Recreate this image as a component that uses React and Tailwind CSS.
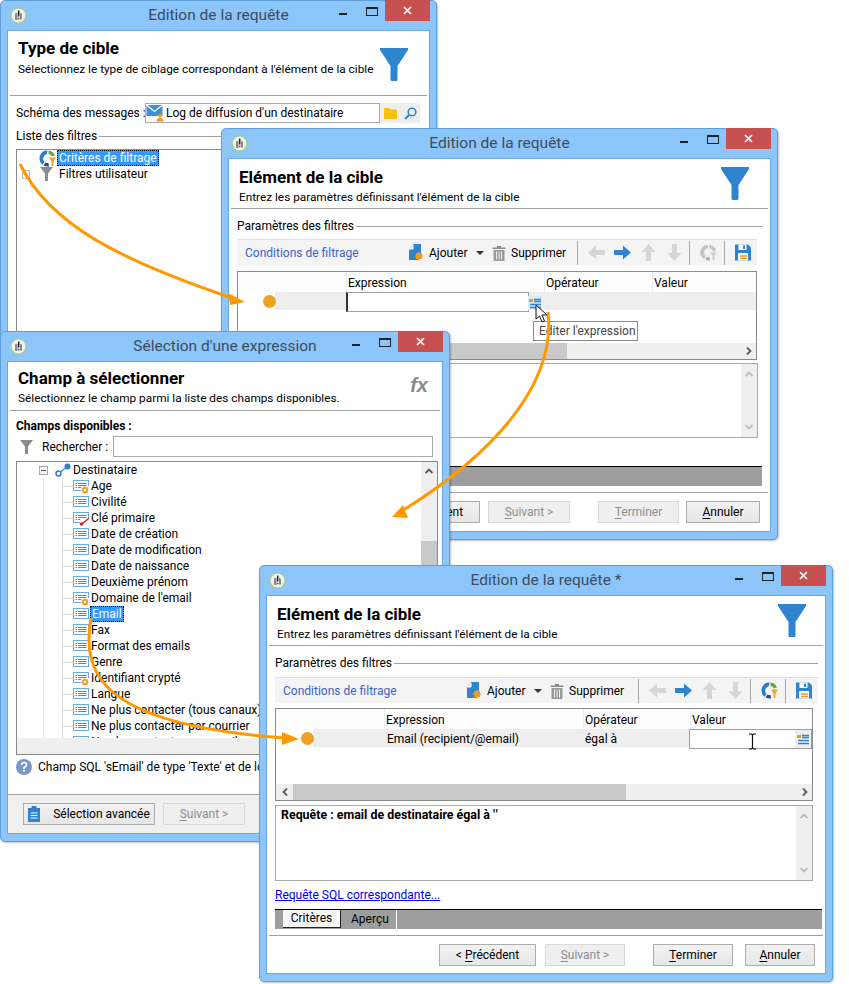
import React from "react";

// --- small drawings ---
function AppIcon() {
  return (
    <svg width="17" height="17" viewBox="0 0 17 17" className="shrink-0">
      <circle cx="8.5" cy="8.5" r="7.5" fill="#f2f2ee" stroke="#a6cf7a" strokeWidth="1.2" />
      <path d="M5 6.500L7.500 5.500V13H5zM10 5.500L12 7V12.500H10z" fill="#8a8a8a" />
      <path d="M8.700 3.500V9.500" stroke="#222" strokeWidth="1.400" />
      <path d="M8 11.500h1.500" stroke="#555" strokeWidth="1.400" />
    </svg>
  );
}

function BigFunnel() {
  return (
    <svg width="28" height="33" viewBox="0 0 28 33">
      <path d="M0 0H28V2L17.500 18V31.500Q17.500 33 16 33H12Q10.500 33 10.500 31.500V18L0 2Z" fill="#2f84d0" />
    </svg>
  );
}

function GrayFunnel({ w = 13, h = 14 }) {
  return (
    <svg width={w} height={h} viewBox="0 0 13 14" className="shrink-0">
      <path d="M0 0H13L8 6.500V14H5V6.500Z" fill="#8c8c8c" />
    </svg>
  );
}

function FieldIcon({ kind }) {
  return (
    <svg width="16" height="16" viewBox="0 0 16 16" className="shrink-0">
      <rect x="0.500" y="2.500" width="15" height="10" fill="#fff" stroke="#6fa8dc" />
      <path d="M2.500 5.500h1.500M5 5.500h8.500M2.500 7.500h1.500M5 7.500h8.500M2.500 9.500h1.500M5 9.500h8.500" stroke="#3f8fd8" />
      {kind === "gear" && (
        <g>
          <rect x="8" y="8" width="8" height="8" fill="#fff" />
          <circle cx="12" cy="12" r="2.200" fill="#fff" stroke="#f09a1c" strokeWidth="1.800" />
          <path d="M12 8.500v1M12 14.500v1M8.500 12h1M14.500 12h1M9.500 9.500l.8.8M14.500 9.500l-.8.8M9.500 14.500l.8-.8M14.500 14.500l-.8-.8" stroke="#f09a1c" strokeWidth="1.200" />
        </g>
      )}
      {kind === "key" && (
        <g>
          <path d="M7 9h9v7H7z" fill="#fff" />
          <path d="M16 8l-7 6" stroke="#d8232a" strokeWidth="1.500" />
          <circle cx="8.500" cy="14" r="1.800" fill="#d8232a" />
        </g>
      )}
    </svg>
  );
}

function Connector() {
  return (
    <svg width="16" height="14" viewBox="0 0 16 14" className="shrink-0">
      <path d="M4 10L12 4" stroke="#3f8fd8" strokeWidth="1.500" />
      <circle cx="3.500" cy="10.500" r="2.500" fill="#fff" stroke="#2f7fcb" strokeWidth="1.500" />
      <circle cx="12.500" cy="3.500" r="3" fill="#2f7fcb" />
    </svg>
  );
}

function RefreshIcon() {
  return (
    <svg width="17" height="17" viewBox="0 0 17 17" className="shrink-0">
      <path d="M8 1A7.500 7.500 0 0 0 4 15L6 12A4.200 4.200 0 0 1 8 4.300Z" fill="#c4c4c4" />
      <path d="M9.500 1A7.500 7.500 0 0 1 16 7L13 7.500A4.200 4.200 0 0 0 9.500 4.300Z" fill="#c4c4c4" />
      <path d="M5 15.500A7.500 7.500 0 0 0 10 16.500L9.500 13A4.200 4.200 0 0 1 7 12.500Z" fill="#b0b0b0" />
      <path d="M10 8.500H17L14.500 12V16H12.500V12Z" fill="#cfcfcf" />
    </svg>
  );
}

function MiniRefresh() {
  return (
    <svg width="17" height="17" viewBox="0 0 17 17" className="shrink-0">
      <path d="M8.500 0.500A8 8 0 0 0 3.500 14.700L5.500 12A4.800 4.800 0 0 1 7.800 4Z" fill="#2f78c4" />
      <path d="M9.500 0.500A8 8 0 0 1 16 5.500L13 6.500A4.800 4.800 0 0 0 9.500 4Z" fill="#6da24c" />
      <path d="M4.500 15.200A8 8 0 0 0 10 16.500L9.500 13A4.800 4.800 0 0 1 6.500 12.500Z" fill="#1f4e86" />
      <path d="M10 7.500H17L14.500 11.500V16H12.500V11.500Z" fill="#f4a12a" />
    </svg>
  );
}

function BlockArrow({ dir, active }) {
  const rot = { right: 0, down: 90, left: 180, up: 270 }[dir];
  return (
    <svg width="17" height="17" viewBox="0 0 17 17" className="shrink-0">
      <path
        d="M0 6H9V1.500L17 8.500L9 15.500V11H0Z"
        fill={active ? "#2f84d0" : "#d6d6d6"}
        transform={`rotate(${rot} 8.500 8.500)`}
      />
    </svg>
  );
}

function SaveIcon() {
  return (
    <svg width="16" height="17" viewBox="0 0 16 17" className="shrink-0">
      <path d="M0 0.500H13L16 3.500V16.500H0Z" fill="#2f84d0" />
      <rect x="3.500" y="0.500" width="8" height="5.500" fill="#fff" />
      <rect x="8" y="1.500" width="2" height="3.500" fill="#2f84d0" />
      <rect x="3" y="9" width="10" height="7.500" fill="#fff" />
      <path d="M5 12h7M5 14.500h7" stroke="#f09a1c" strokeWidth="1.500" />
    </svg>
  );
}

function TrashIcon() {
  return (
    <svg width="14" height="16" viewBox="0 0 14 16" className="shrink-0">
      <path d="M5 1h4v1.500h4.500V4H.500V2.500H5z" fill="#8a8a8a" />
      <path d="M1.500 5h11v11h-11z" fill="#9a9a9a" />
      <path d="M4.500 6.500V14.500M7 6.500V14.500M9.500 6.500V14.500" stroke="#ececec" />
    </svg>
  );
}

function AddIcon() {
  return (
    <svg width="15" height="17" viewBox="0 0 15 17" className="shrink-0">
      <path d="M4.500 0H12V9H9V16H0V5Z" fill="#2f84d0" />
      <path d="M4 1V5H0" fill="#fff" stroke="#fff" />
      <circle cx="10" cy="12" r="3.200" fill="#f09a1c" />
      <path d="M10 7.500v9M5.500 12h9M7 9l6 6M13 9l-6 6" stroke="#f09a1c" />
    </svg>
  );
}

function ExprIcon() {
  return (
    <svg width="12" height="13" viewBox="0 0 12 13" className="shrink-0">
      <rect x="0" y="2" width="4" height="3" fill="#f09a1c" />
      <path d="M5 2.500h7M5 4.500h7M1 7.500h11M1 10.500h11" stroke="#2f84d0" strokeWidth="1.300" />
    </svg>
  );
}

function MailIcon() {
  return (
    <svg width="18" height="18" viewBox="0 0 18 18" className="shrink-0">
      <rect x="0.500" y="1" width="16" height="11" fill="#3f8fd8" />
      <path d="M0.500 1L8.500 7.500L16.500 1" fill="none" stroke="#fff" strokeWidth="1.200" />
      <circle cx="14" cy="11.500" r="2" fill="#f09a1c" />
      <path d="M10.500 17.500Q10.500 14 14 14T17.500 17.500Z" fill="#f09a1c" />
    </svg>
  );
}

function FolderIcon() {
  return (
    <svg width="13" height="11" viewBox="0 0 13 11" className="shrink-0">
      <path d="M0 0H5L6 1.500H13V11H0Z" fill="#f2c20c" />
    </svg>
  );
}

function SearchIcon() {
  return (
    <svg width="13" height="13" viewBox="0 0 13 13" className="shrink-0">
      <circle cx="8" cy="5" r="3.800" fill="none" stroke="#2f84d0" strokeWidth="1.500" />
      <path d="M5 8L1 12" stroke="#2f84d0" strokeWidth="2" />
    </svg>
  );
}

function HelpIcon() {
  return (
    <svg width="16" height="16" viewBox="0 0 16 16" className="shrink-0">
      <circle cx="8" cy="8" r="8" fill="#7b97c9" />
      <path d="M5.500 6Q5.500 3.500 8 3.500T10.500 6Q10.500 7.300 8 8.500V10" fill="none" stroke="#fff" strokeWidth="1.600" />
      <rect x="7.100" y="11" width="1.800" height="1.800" fill="#fff" />
    </svg>
  );
}

function ClipboardIcon() {
  return (
    <svg width="12" height="16" viewBox="0 0 12 16" className="shrink-0">
      <path d="M0 2H3.500V0H8.500V2H12V16H0Z" fill="#2f84d0" />
      <path d="M2.500 7h7M2.500 9.500h7M2.500 12h7" stroke="#fff" />
    </svg>
  );
}

function Chevron({ dir, light }) {
  const rot = { right: 0, down: 90, left: 180, up: 270 }[dir];
  return (
    <svg width="8" height="8" viewBox="0 0 8 8" className="shrink-0">
      <path
        d="M2 0.500L5.500 4L2 7.500"
        fill="none"
        stroke={light ? "#bdbdbd" : "#5a5a5a"}
        strokeWidth="1.800"
        transform={`rotate(${rot} 4 4)`}
      />
    </svg>
  );
}

// --- window parts ---
function Win({ className, title, children }) {
  return (
    <div className={`absolute box-border flex flex-col rounded-[5px] border border-[#5f9fdc] bg-[#8cc5f9] shadow-[1px_1px_2px_rgba(0,0,0,0.25)] ${className}`}>
      <div className="grid h-[29px] shrink-0 grid-cols-[1fr_auto_1fr]">
        <div className="flex items-start pl-[9px] pt-[6px]">
          <AppIcon />
        </div>
        <div className="pt-[2px] text-[15.5px] leading-[24px] text-[#3d4c5c]">{title}</div>
        <div className="flex items-start justify-end pr-[6px]">
          <div className="mr-[19px] mt-[12px] h-[2px] w-[8px] bg-[#222]" />
          <div className="mr-[7px] mt-[6px] box-border h-[9px] w-[12px] border border-t-2 border-[#222]" />
          <div className="flex h-[21px] w-[45px] -mt-px items-center justify-center bg-[#c75050]">
            <svg width="9" height="9" viewBox="0 0 9 9">
              <path d="M1 1L8 8M8 1L1 8" stroke="#fff" strokeWidth="1.700" />
            </svg>
          </div>
        </div>
      </div>
      <div className="mx-[6px] mb-[7px] flex min-h-0 flex-1 flex-col overflow-hidden border border-[#6aa8e2] bg-white">
        {children}
      </div>
    </div>
  );
}

function Head({ title, sub, right, h = "h-[49px]", pt = "pt-[8px]", gap = "mt-[2px]" }) {
  return (
    <>
      <div className={`flex shrink-0 justify-between ${h} ${pt} pl-[10px]`}>
        <div>
          <div className="text-[17px] font-bold leading-[20px] text-black">{title}</div>
          <div className={`text-[11.8px] leading-[16px] text-black ${gap}`}>{sub}</div>
        </div>
        {right}
      </div>
      <div className="mx-[2px] h-px shrink-0 bg-[#a0a0a0]" />
    </>
  );
}

function GroupLabel({ children, className }) {
  return (
    <div className={`flex h-[16px] shrink-0 items-center gap-[2px] text-[12px] ${className}`}>
      <span>{children}</span>
      <div className="h-px flex-1 bg-[#a0a0a0]" />
    </div>
  );
}

function Btn({ children, disabled, className }) {
  return (
    <div
      className={`box-border flex h-[22px] items-center justify-center border text-[12px] ${
        disabled
          ? "border-[#d9d9d9] bg-[#efefef] text-[#8d8d8d]"
          : "border-[#acacac] bg-[linear-gradient(#f2f2f2,#e6e6e6)] text-black"
      } ${className}`}
    >
      <span>{children}</span>
    </div>
  );
}

function Toolbar({ refreshActive, className, supprimerW }) {
  return (
    <div className={`flex h-[26px] shrink-0 items-center border-t border-[#e0e0e0] bg-[#f4f4f4] pl-[8px] pr-[6px] text-[12px] ${className}`}>
      <span className="text-[#3a63c8]">Conditions de filtrage</span>
      <div className="ml-auto flex items-center">
        <AddIcon />
        <span className="ml-[5px] w-[42px]">Ajouter</span>
        <div className="ml-[5px] h-0 w-0 border-x-[4px] border-t-[4px] border-x-transparent border-t-[#333]" />
        <div className="ml-[8px]"><TrashIcon /></div>
        <span className={`ml-[5px] ${supprimerW}`}>Supprimer</span>
        <div className="h-[24px] w-px bg-[#a8a8a8]" />
        <div className="ml-[10px] flex gap-[9px]">
          <BlockArrow dir="left" />
          <BlockArrow dir="right" active />
          <BlockArrow dir="up" />
          <BlockArrow dir="down" />
        </div>
        <div className="ml-[6px] h-[24px] w-px bg-[#a8a8a8]" />
        <div className="ml-[10px] mr-[7px]">{refreshActive ? <MiniRefresh /> : <RefreshIcon />}</div>
        <div className="h-[24px] w-px bg-[#a8a8a8]" />
        <div className="ml-[10px]"><SaveIcon /></div>
      </div>
    </div>
  );
}

function HScroll({ thumb, leftArrow }) {
  return (
    <div className="flex h-[16px] shrink-0 items-center bg-[#efefef]">
      <div className="flex w-[17px] shrink-0 items-center justify-center">
        {leftArrow && <Chevron dir="left" />}
      </div>
      <div className={`h-full bg-[#c9c9c9] ${thumb}`} />
      <div className="flex-1" />
      <div className="flex w-[14px] shrink-0 items-center justify-center">
        <Chevron dir="right" />
      </div>
    </div>
  );
}

function FilterTable({ height, thumb, leftArrow, row, className, c2, c3 }) {
  return (
    <div className={`relative box-border flex shrink-0 flex-col border border-[#8a8a8a] text-[12px] ${height} ${className}`}>
      <div className="flex h-[20px] shrink-0 bg-[#fdfdfd]">
        <div className="w-[108px] shrink-0" />
        <div className={`shrink-0 border-l border-[#e3edf7] pl-px leading-[22px] ${c2}`}>Expression</div>
        <div className={`shrink-0 border-l border-[#e3edf7] pl-px leading-[22px] ${c3}`}>Opérateur</div>
        <div className="flex-1 border-l border-[#e3edf7] pl-px leading-[22px]">Valeur</div>
      </div>
      <div className="flex h-[18px] shrink-0 bg-[#eeeeee]">
        <div className="flex w-[37px] shrink-0 items-center justify-end bg-white">
          <div className="-mr-px h-[13px] w-[13px] rounded-full bg-[#f0a023]" />
        </div>
        <div className="w-[71px] shrink-0" />
        {row}
      </div>
      <div className="flex-1" />
      <HScroll thumb={thumb} leftArrow={leftArrow} />
    </div>
  );
}

function TextArea({ height, children, className }) {
  return (
    <div className={`box-border flex shrink-0 border border-[#a9a9a9] text-[12.4px] font-bold text-black ${height} ${className}`}>
      <div className="flex-1 pl-[5px] pt-px leading-[16px]">{children}</div>
      <div className="flex w-[16px] shrink-0 flex-col items-center justify-between bg-[#efefef] py-[6px]">
        <Chevron dir="up" light />
        <Chevron dir="down" light />
      </div>
    </div>
  );
}

function U({ children }) {
  return <span className="underline underline-offset-2">{children}</span>;
}

const fields = [
  ["Age", "gear"],
  ["Civilité"],
  ["Clé primaire", "key"],
  ["Date de création"],
  ["Date de modification"],
  ["Date de naissance"],
  ["Deuxième prénom"],
  ["Domaine de l'email", "gear"],
  ["Email", null, true],
  ["Fax"],
  ["Format des emails"],
  ["Genre"],
  ["Identifiant crypté", "gear"],
  ["Langue"],
  ["Ne plus contacter (tous canaux)"],
  ["Ne plus contacter par courrier"],
  ["Ne plus contacter par email"],
];

function TreeLines({ children }) {
  return (
    <div className="flex h-[16px] shrink-0 items-center">
      <div className="w-[26px] shrink-0" />
      <div className="h-full w-[19px] shrink-0 border-l border-[#e4e4e4]" />
      <div className="flex h-full w-[11px] shrink-0 items-center border-l border-[#dcdcdc]">
        <div className="h-px w-full bg-[#dcdcdc]" />
      </div>
      {children}
    </div>
  );
}

export default function App() {
  return (
    <div className="relative h-[984px] w-[849px] overflow-hidden bg-white font-['Roboto','Liberation_Sans',sans-serif] text-black">
      {/* back window */}
      <Win className="left-0 top-0 h-[345px] w-[437px]" title="Edition de la requête">
        <Head
          title="Type de cible"
          sub="Sélectionnez le type de ciblage correspondant à l'élément de la cible"
          h="h-[64px]"
          pt="pt-[7px]"
          gap="mt-[3px]"
          right={<div className="pr-[21px] pt-[10px]"><BigFunnel /></div>}
        />
        <div className="ml-[8px] mr-[8px] mt-[7px] flex h-[20px] shrink-0 items-center text-[12px]">
          <span className="w-[129px] shrink-0 whitespace-nowrap">Schéma des messages :</span>
          <div className="box-border flex h-full w-[235px] shrink-0 items-center gap-[2px] border border-[#a9a9a9]">
            <MailIcon />
            <span>Log de diffusion d'un destinataire</span>
          </div>
          <div className="flex h-full w-[40px] shrink-0 items-center justify-center gap-[7px] bg-[#eeeeee]">
            <FolderIcon />
            <SearchIcon />
          </div>
        </div>
        <GroupLabel className="ml-[8px] mr-[8px] mt-[5px]">Liste des filtres</GroupLabel>
        <div className="ml-[8px] mr-[8px] mt-[5px] flex-1 border border-[#8a8a8a] text-[12px]">
          <div className="flex h-[16px] items-center pl-[22px]">
            <MiniRefresh />
            <span className="ml-px border border-dotted border-black bg-[#3399ff] px-px leading-[14px] text-white">Critères de filtrage</span>
          </div>
          <div className="flex h-[16px] items-center pl-[5px]">
            <div className="h-[9px] w-[8px] border border-[#bcbcbc]" />
            <div className="ml-[10px]"><GrayFunnel /></div>
            <span className="ml-[6px]">Filtres utilisateur</span>
          </div>
        </div>
      </Win>

      {/* second window */}
      <Win className="left-[221px] top-[128px] h-[412px] w-[557px]" title="Edition de la requête">
        <Head
          title="Elément de la cible"
          sub="Entrez les paramètres définissant l'élément de la cible"
          right={<div className="pr-[21px]"><BigFunnel /></div>}
        />
        <GroupLabel className="ml-[8px] mr-[8px] mt-[9px]">Paramètres des filtres</GroupLabel>
        <Toolbar className="ml-[8px] mr-[13px] mt-[5px]" supprimerW="w-[66px]" />
        <FilterTable
          height="h-[89px]"
          thumb="w-[312px]"
          className="ml-[8px] mr-[13px] mt-[6px]"
          c2="w-[198px]"
          c3="w-[108px]"
          row={
            <div className="-mb-[2px] box-border flex h-[20px] w-[183px] shrink-0 border border-l-2 border-[#9e9e9e] border-l-[#333] bg-white" />
          }
        />
        <TextArea height="h-[75px]" className="ml-[8px] mr-[12px] mt-[3px]">{""}</TextArea>
        <div className="ml-[8px] mr-[8px] mt-[28px] h-[20px] shrink-0 border-t border-black bg-[#9e9e9e]" />
        <div className="mx-[2px] mt-[6px] h-px shrink-0 bg-[#a0a0a0]" />
        <div className="mt-[8px] flex shrink-0 justify-end pr-[10px]">
          <Btn className="w-[97px]">&lt; <U>P</U>récédent</Btn>
          <Btn disabled className="ml-[8px] w-[82px]"><U>S</U>uivant &gt;</Btn>
          <Btn disabled className="ml-[28px] w-[81px]"><U>T</U>erminer</Btn>
          <Btn className="ml-[7px] w-[74px]"><U>A</U>nnuler</Btn>
        </div>
      </Win>

      {/* tooltip and cursor over the second window */}
      <div className="absolute left-[528px] top-[296px] z-10 flex h-[14px] w-[14px] items-center justify-center bg-[#dbe9f7]">
        <ExprIcon />
      </div>
      <div className="absolute left-[533px] top-[321px] z-10 box-border flex h-[20px] w-[105px] items-center whitespace-nowrap border border-[#8a8a8a] bg-white pl-[5px] text-[12px] text-[#444]">
        Editer l'expression
      </div>
      <svg className="absolute left-[535px] top-[304px] z-10" width="13" height="19" viewBox="0 0 13 19">
        <path d="M1 1V15L4.500 12L7 18L9.500 17L7 11H12Z" fill="#fff" stroke="#111" />
      </svg>

      {/* expression picker */}
      <Win className="left-0 top-[331px] z-20 h-[511px] w-[450px]" title="Sélection d'une expression">
        <Head
          title="Champ à sélectionner"
          sub="Sélectionnez le champ parmi la liste des champs disponibles."
          h="h-[48px]"
          pt="pt-[6px]"
          right={<div className="pr-[14px] pt-[5px] font-['Liberation_Sans',sans-serif] text-[20px] font-bold italic leading-[24px] text-[#8a8a8a]">fx</div>}
        />
        <div className="ml-[8px] mt-[7px] h-[16px] shrink-0 text-[12px] font-bold leading-[16px]">Champs disponibles :</div>
        <div className="ml-[12px] mr-[9px] mt-[2px] flex h-[21px] shrink-0 items-center text-[12px]">
          <GrayFunnel />
          <span className="ml-[9px] w-[71px] shrink-0">Rechercher :</span>
          <div className="h-full flex-1 border border-[#a9a9a9]" />
        </div>
        <div className="ml-[8px] mr-[4px] mt-[4px] box-border flex h-[294px] shrink-0 flex-col border border-[#8a8a8a] text-[12px]">
          <div className="flex min-h-0 flex-1">
            <div className="min-w-0 flex-1 overflow-hidden">
              <div className="flex h-[16px] items-center pl-[22px]">
                <div className="flex h-[9px] w-[9px] shrink-0 items-center justify-center border border-[#a8a8a8] bg-[#f4f4f4]">
                  <div className="h-px w-[5px] bg-[#555]" />
                </div>
                <div className="ml-[7px]"><Connector /></div>
                <span className="ml-[2px]">Destinataire</span>
              </div>
              {fields.map(([name, kind, selected]) => (
                <TreeLines key={name}>
                  <FieldIcon kind={kind} />
                  {selected ? (
                    <span className="ml-px border border-dotted border-black bg-[#3399ff] px-px leading-[14px] text-white">{name}</span>
                  ) : (
                    <span className="ml-[2px] whitespace-nowrap">{name}</span>
                  )}
                </TreeLines>
              ))}
            </div>
            <div className="flex w-[16px] shrink-0 flex-col items-center bg-[#efefef]">
              <div className="mt-[5px]"><Chevron dir="up" /></div>
              <div className="mt-[66px] h-[30px] w-full bg-[#c9c9c9]" />
            </div>
          </div>
          <div className="h-[16px] shrink-0 bg-[#efefef]" />
        </div>
        <div className="ml-[8px] mt-[4px] flex h-[16px] shrink-0 items-center gap-[6px] whitespace-nowrap text-[12px]">
          <HelpIcon />
          <span>Champ SQL 'sEmail' de type 'Texte' et de longueur 64</span>
        </div>
        <div className="mt-[19px] flex-1 border-t border-[#a0a0a0] bg-[#f0f0f0] pl-[15px] pt-[8px]">
          <div className="flex">
            <Btn className="w-[132px]">
              <span className="flex items-center gap-[13px]"><ClipboardIcon />Sélection avancée</span>
            </Btn>
            <Btn disabled className="ml-[8px] w-[82px]"><U>S</U>uivant &gt;</Btn>
          </div>
        </div>
      </Win>

      {/* front window */}
      <Win className="left-[259px] top-[565px] z-30 h-[417px] w-[574px]" title="Edition de la requête *">
        <Head
          title="Elément de la cible"
          sub="Entrez les paramètres définissant l'élément de la cible"
          right={<div className="pr-[19px]"><BigFunnel /></div>}
        />
        <GroupLabel className="ml-[8px] mr-[7px] mt-[9px]">Paramètres des filtres</GroupLabel>
        <Toolbar refreshActive className="ml-[8px] mr-[7px] mt-[6px]" supprimerW="w-[69px]" />
        <FilterTable
          height="h-[93px]"
          thumb="w-[333px]"
          leftArrow
          className="ml-[8px] mr-[12px] mt-[5px]"
          c2="w-[199px]"
          c3="w-[107px]"
          row={
            <>
              <div className="w-[199px] shrink-0 pl-[3px] leading-[20px]">Email (recipient/@email)</div>
              <div className="w-[106px] shrink-0 pl-[2px] leading-[20px]">égal à</div>
              <div className="-mb-[2px] box-border flex h-[20px] flex-1 justify-end border border-[#9e9e9e] bg-white">
                <div className="flex w-[16px] items-center justify-center bg-[#eeeeee]"><ExprIcon /></div>
              </div>
            </>
          }
        />
        <TextArea height="h-[76px]" className="ml-[8px] mr-[12px] mt-[4px]">
          Requête : email de destinataire égal à <span className="tracking-[1px]">''</span>
        </TextArea>
        <div className="ml-[8px] mt-[6px] h-[16px] shrink-0 text-[12px] leading-[16px] text-[#0000ee] underline">Requête SQL correspondante...</div>
        <div className="ml-[8px] mr-[3px] mt-[6px] flex h-[20px] shrink-0 border-t border-black bg-[#9e9e9e] text-[12px]">
          <div className="ml-[8px] h-[18px] w-[58px] border-b border-r border-[#222] bg-[#f7f7f7] text-center leading-[16px]">Critères</div>
          <div className="w-[56px] border-r border-white pl-[10px] leading-[18px]">Aperçu</div>
        </div>
        <div className="mx-[2px] mt-[6px] h-px shrink-0 bg-[#a0a0a0]" />
        <div className="mt-[8px] flex shrink-0 justify-end pr-[10px]">
          <Btn className="w-[97px]">&lt; <U>P</U>récédent</Btn>
          <Btn disabled className="ml-[9px] w-[80px]"><U>S</U>uivant &gt;</Btn>
          <Btn className="ml-[28px] w-[80px]"><U>T</U>erminer</Btn>
          <Btn className="ml-[12px] w-[70px]"><U>A</U>nnuler</Btn>
        </div>
      </Win>

      {/* text cursor over the value field */}
      <svg className="absolute left-[748px] top-[733px] z-30" width="9" height="17" viewBox="0 0 9 17">
        <path d="M1 1H3.500L4.500 2L5.500 1H8M4.500 2V15M1 16H3.500L4.500 15L5.500 16H8" fill="none" stroke="#111" strokeWidth="1.200" />
      </svg>

      {/* orange callout arrows */}
      <svg className="pointer-events-none absolute left-0 top-0 z-40" width="849" height="984" viewBox="0 0 849 984">
        <g fill="none" stroke="#f90" strokeWidth="3">
          <path d="M20 164C50 225 120 260 232 298" />
          <path d="M548 312C556 380 500 450 402 511" />
          <path d="M91 618C80 680 110 725 285 738" />
        </g>
        <g fill="#f90">
          <path d="M245 302L228 293L230 305Z" />
          <path d="M392 517L403 505L408 518Z" />
          <path d="M299 739L282 732V745Z" />
        </g>
      </svg>
    </div>
  );
}
